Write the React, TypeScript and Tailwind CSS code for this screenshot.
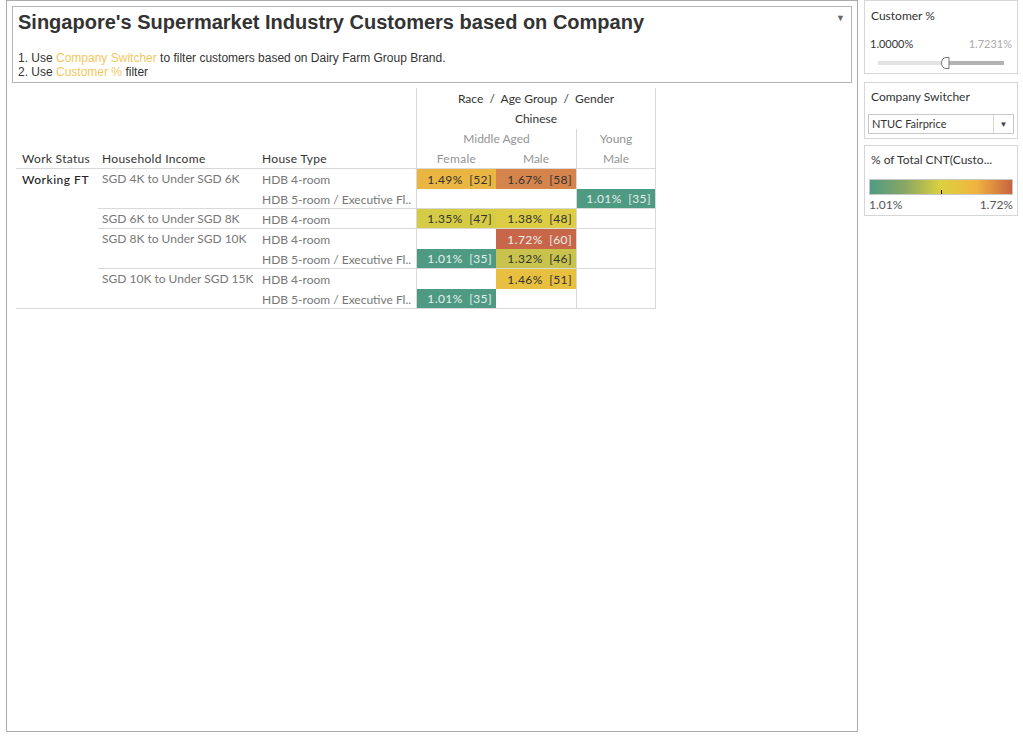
import React from "react";

type Cell = { text: string; bg: string; light?: boolean } | null;

type Row = {
  income?: string;
  house: string;
  female: Cell;
  male: Cell;
  young: Cell;
  groupEnd?: boolean;
};

const TEAL = "#4f9a83";

const ROWS: Row[] = [
  {
    income: "SGD 4K to Under SGD 6K",
    house: "HDB 4-room",
    female: { text: "1.49% [52]", bg: "#eab541" },
    male: { text: "1.67% [58]", bg: "#d5844b" },
    young: null,
  },
  {
    house: "HDB 5-room / Executive Fl..",
    female: null,
    male: null,
    young: { text: "1.01% [35]", bg: TEAL, light: true },
    groupEnd: true,
  },
  {
    income: "SGD 6K to Under SGD 8K",
    house: "HDB 4-room",
    female: { text: "1.35% [47]", bg: "#d6cb45" },
    male: { text: "1.38% [48]", bg: "#dccd44" },
    young: null,
    groupEnd: true,
  },
  {
    income: "SGD 8K to Under SGD 10K",
    house: "HDB 4-room",
    female: null,
    male: { text: "1.72% [60]", bg: "#c8664a", light: true },
    young: null,
  },
  {
    house: "HDB 5-room / Executive Fl..",
    female: { text: "1.01% [35]", bg: TEAL, light: true },
    male: { text: "1.32% [46]", bg: "#c7c34c" },
    young: null,
    groupEnd: true,
  },
  {
    income: "SGD 10K to Under SGD 15K",
    house: "HDB 4-room",
    female: null,
    male: { text: "1.46% [51]", bg: "#e8bf3e" },
    young: null,
  },
  {
    house: "HDB 5-room / Executive Fl..",
    female: { text: "1.01% [35]", bg: TEAL, light: true },
    male: null,
    young: null,
  },
];

function ValueCell({ cell, className }: { cell: Cell; className: string }) {
  return (
    <div className={className}>
      {cell && (
        <div
          className={`flex h-full items-center justify-end pr-[4px] tracking-[0.4px] [word-spacing:3px] ${
            cell.light ? "text-[#e4efea]" : "text-[#333]"
          }`}
          style={{ backgroundColor: cell.bg }}
        >
          {cell.text}
        </div>
      )}
    </div>
  );
}

function CrossTab() {
  return (
    <div className="ml-[9px] mt-[6px] grid w-[640px] auto-rows-[20px] grid-cols-[82px_160px_158px_80px_80px_80px] text-[12px] leading-[19px]">
      {/* header rows */}
      <div className="col-span-3 row-span-3" />
      <div className="col-span-3 -mt-px border-l border-r border-[#d9d9d9] pt-px text-center text-[#333]">
        Race&nbsp;&nbsp;/&nbsp;&nbsp;Age Group&nbsp;&nbsp;/&nbsp;&nbsp;Gender
      </div>
      <div className="col-span-3 border-l border-r border-[#d9d9d9] text-center text-[#333]">
        Chinese
      </div>
      <div className="col-span-2 border-l border-[#d9d9d9] text-center text-[#949494]">
        Middle Aged
      </div>
      <div className="border-l border-r border-[#d9d9d9] text-center text-[#949494]">
        Young
      </div>

      <div className="border-b border-[#d9d9d9] pl-[6px] tracking-[0.3px] text-[#333]">Work Status</div>
      <div className="border-b border-[#d9d9d9] pl-[4px] tracking-[0.3px] text-[#333]">Household Income</div>
      <div className="border-b border-[#d9d9d9] pl-[4px] tracking-[0.3px] text-[#333]">House Type</div>
      <div className="border-b border-l border-[#d9d9d9] text-center tracking-[0.3px] text-[#949494]">Female</div>
      <div className="border-b border-[#d9d9d9] text-center text-[#949494]">Male</div>
      <div className="border-b border-l border-r border-[#d9d9d9] text-center text-[#949494]">Male</div>

      {/* body */}
      <div className="row-span-7 border-b border-[#d9d9d9] pl-[6px] pt-px font-medium tracking-[0.5px] text-[#222]">
        Working FT
      </div>
      {ROWS.map((r, i) => {
        const line = r.groupEnd || i === ROWS.length - 1 ? "border-b border-[#d9d9d9]" : "";
        const span = r.income
          ? ROWS[i + 1] && !ROWS[i + 1].income && !r.groupEnd
            ? "row-span-2"
            : ""
          : null;
        const incomeLine =
          r.income && span === "row-span-2" ? "border-b border-[#d9d9d9]" : line;
        return (
          <React.Fragment key={i}>
            {span !== null && (
              <div className={`${span} ${incomeLine} truncate pl-[4px] text-[#777]`}>
                {r.income}
              </div>
            )}
            <div className={`truncate pl-[4px] pt-px text-[#777] ${line}`}>{r.house}</div>
            <ValueCell cell={r.female} className={`border-l border-[#d9d9d9] ${line}`} />
            <ValueCell cell={r.male} className={line} />
            <ValueCell cell={r.young} className={`border-l border-r border-[#d9d9d9] ${line}`} />
          </React.Fragment>
        );
      })}
    </div>
  );
}

function Slider() {
  return (
    <div className="relative mx-[13px] mt-[6px] flex h-[12px] items-center">
      <div className="h-[4px] w-[67px] bg-[#e3e3e3]" />
      <div className="h-[4px] flex-1 bg-[#b3b3b3]" />
      <svg
        className="absolute left-[63px] top-0"
        width="9"
        height="12"
        viewBox="0 0 9 12"
      >
        <path
          d="M8 0.5 H5 A4.5 5.5 0 0 0 5 11.5 H8 Z"
          fill="#fff"
          stroke="#777"
          strokeWidth="1"
        />
      </svg>
    </div>
  );
}

export default function App() {
  return (
    <div className="flex h-[738px] w-[1023px] bg-white font-['Lato',sans-serif]">
      <div className="ml-[6px] h-[732px] w-[852px] border border-[#ababab]">
        <div className="relative ml-[5px] mt-[5px] h-[77px] w-[840px] border border-[#b4b4b4] pl-[5px] pt-[3px] font-['Liberation_Sans',Arial,sans-serif] text-[#333]">
          <div className="text-[20px] font-bold leading-[24px]">
            Singapore's Supermarket Industry Customers based on Company
          </div>
          <div className="mt-[17px] text-[12px] leading-[14px]">
            <div>
              1. Use <span className="text-[#f0c860]">Company Switcher</span> to filter
              customers based on Dairy Farm Group Brand.
            </div>
            <div>
              2. Use <span className="text-[#f0c860]">Customer %</span> filter
            </div>
          </div>
          <span className="absolute right-[6px] top-[5px] text-[9px] text-[#666]">▼</span>
        </div>
        <CrossTab />
      </div>

      <div className="ml-[6px] flex w-[154px] flex-col text-[#333]">
        <div className="h-[74px] border border-[#d6d6d6]">
          <div className="pl-[6px] pt-[7px] text-[12px] leading-[16px]">Customer %</div>
          <div className="mt-[13px] flex justify-between px-[5px] text-[11px] leading-[14px]">
            <span>1.0000%</span>
            <span className="text-[#aaa]">1.7231%</span>
          </div>
          <Slider />
        </div>

        <div className="mt-[8px] h-[57px] border border-[#d6d6d6]">
          <div className="pl-[6px] pt-[6px] text-[12px] leading-[16px]">Company Switcher</div>
          <div className="mx-[3px] mt-[9px] flex h-[20px] items-center border border-[#c8c8c8] text-[11px]">
            <span className="flex-1 pl-[3px]">NTUC Fairprice</span>
            <span className="flex h-full w-[20px] items-center justify-center border-l border-[#d6d6d6] text-[8px] text-[#444]">
              ▼
            </span>
          </div>
        </div>

        <div className="mt-[6px] h-[71px] border border-[#d6d6d6]">
          <div className="truncate pl-[6px] pt-[6px] text-[12px] leading-[16px]">
            % of Total CNT(Custo...
          </div>
          <div className="relative mx-[4px] mt-[11px] h-[16px] border border-[#c8c8c8] bg-[linear-gradient(to_right,#4e9b84,#8aa862_25%,#dcd13e_50%,#f0b440_75%,#c9633f)]">
            <div className="absolute bottom-0 left-1/2 h-[4px] w-px bg-black" />
          </div>
          <div className="mt-[3px] flex justify-between px-[4px] text-[12px] leading-[14px] text-[#555]">
            <span>1.01%</span>
            <span>1.72%</span>
          </div>
        </div>
      </div>
    </div>
  );
}
